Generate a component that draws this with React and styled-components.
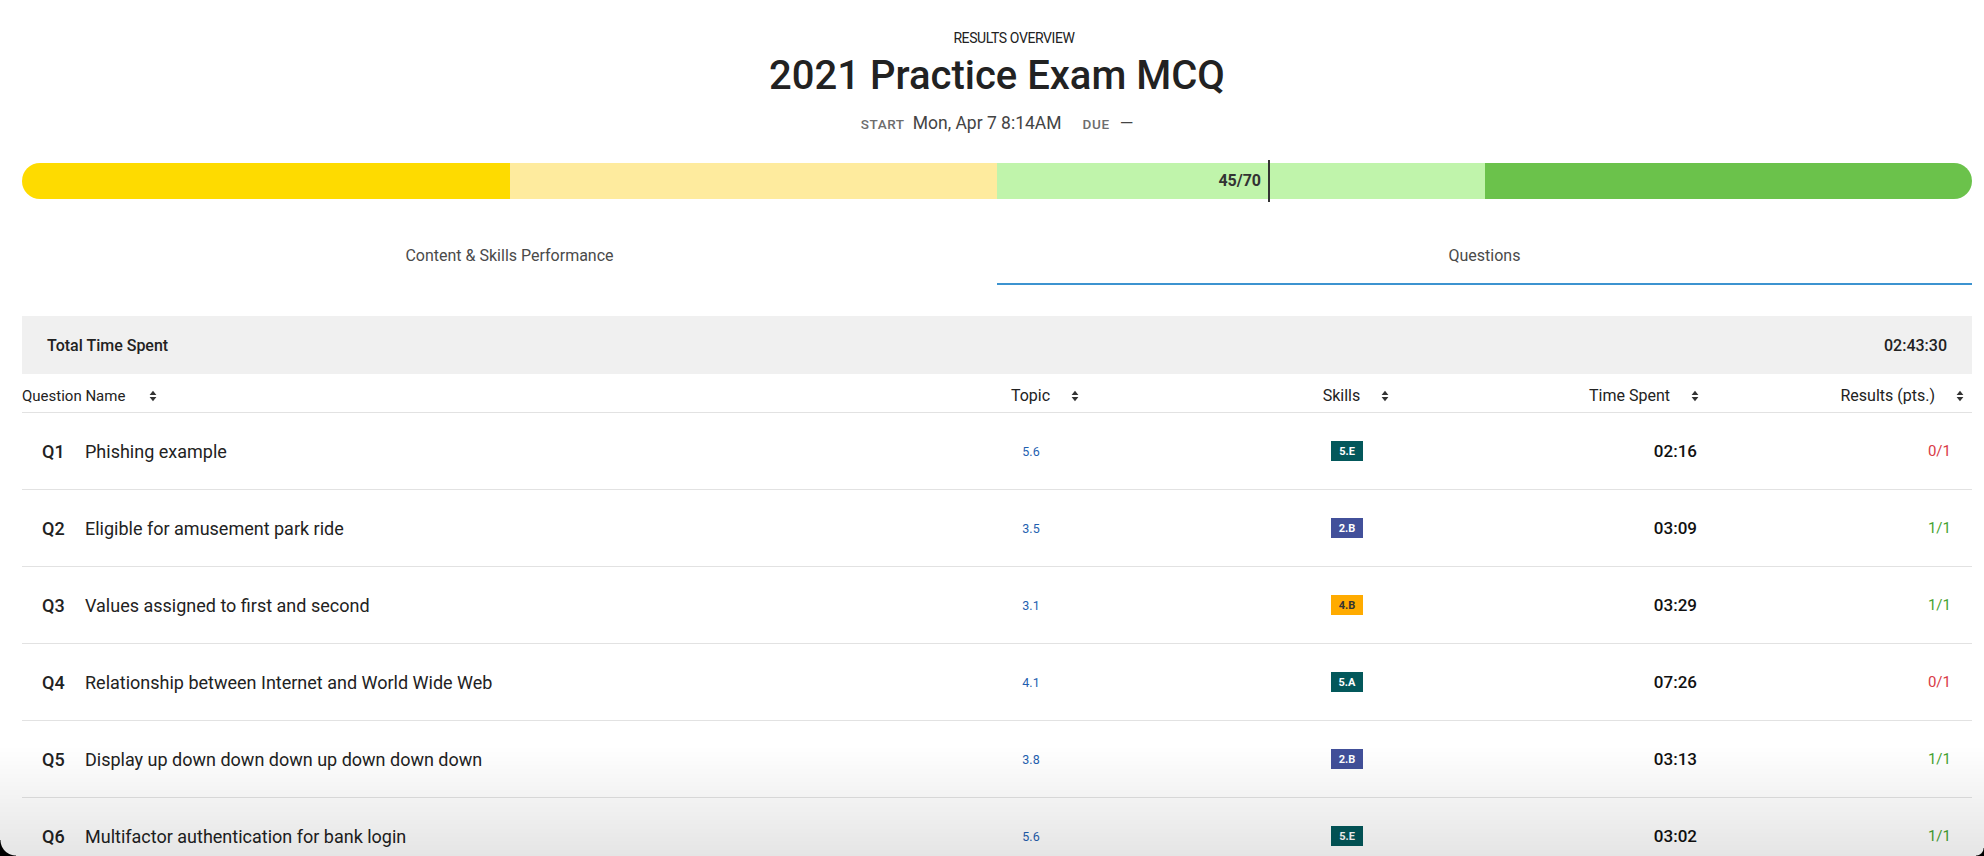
import React from "react";
import styled, { createGlobalStyle } from "styled-components";

const GlobalStyle = createGlobalStyle`
	html, body {
		margin: 0;
		padding: 0;
		background: #ffffff;
		overflow: hidden;
	}
	body {
		font-family: Roboto, "Liberation Sans", Arial, sans-serif;
		color: #222;
	}
`;

const Page = styled.div`
	padding: 28px 12px 0 22px;
`;

const Heading = styled.header`
	display: flex;
	flex-direction: column;
	align-items: center;
`;

const Eyebrow = styled.div`
	font-size: 14px;
	letter-spacing: -0.4px;
	line-height: 20px;
	color: #222;
	text-transform: uppercase;
	margin-left: 34px;
`;

const Title = styled.h1`
	margin: 5px 0 0;
	font-size: 40px;
	line-height: 46px;
	font-weight: 500;
	color: #222;
`;

const Meta = styled.div`
	margin-top: 14px;
	display: flex;
	align-items: baseline;
	line-height: 20px;
`;

const MetaLabel = styled.span`
	font-size: 13.5px;
	font-weight: 500;
	color: #6d6d6d;
	letter-spacing: 0.6px;
	margin-right: ${(p) => p.$gap}px;
`;

const MetaValue = styled.span`
	font-size: 17.5px;
	color: #444;
	margin-right: ${(p) => p.$gap || 0}px;
`;

const BarWrap = styled.div`
	position: relative;
	margin-top: 29px;
`;

const Bar = styled.div`
	display: flex;
	height: 36px;
	border-radius: 18px;
	overflow: hidden;
`;

const Segment = styled.div`
	flex: 1;
	background: ${(p) => p.$color};
`;

const Marker = styled.div`
	position: absolute;
	top: -3px;
	bottom: -3px;
	width: 2px;
	background: #333;
`;

const MarkerLabel = styled.span`
	position: absolute;
	right: 9px;
	top: 3px;
	line-height: 36px;
	font-size: 16px;
	font-weight: 700;
	color: #333;
	white-space: nowrap;
`;

const Tabs = styled.nav`
	display: grid;
	grid-template-columns: 1fr 1fr;
	margin-top: 28px;
`;

const Tab = styled.div`
	height: 55px;
	display: flex;
	align-items: center;
	justify-content: center;
	padding-top: 1px;
	font-size: 16px;
	color: #4a4a4a;
	border-bottom: 2px solid ${(p) => (p.$active ? "#3c93d0" : "transparent")};
`;

const TotalRow = styled.div`
	margin-top: 31px;
	height: 58px;
	background: #f0f0f0;
	display: flex;
	align-items: center;
	justify-content: space-between;
	padding: 0 25px;
	font-size: 16px;
	font-weight: 500;
	color: #222;
`;

const columns = "898px 240px 380px 170px 1fr";

const HeadRow = styled.div`
	display: grid;
	grid-template-columns: ${columns};
	height: 38px;
	border-bottom: 1px solid #e2e2e2;
	color: #222;
`;

const HeadCell = styled.div`
	display: flex;
	align-items: center;
	padding-top: 5px;
	font-size: ${(p) => p.$size || 16}px;
	justify-content: ${(p) => p.$justify || "flex-start"};
	padding-left: ${(p) => p.$shift || 0}px;
	padding-right: ${(p) => p.$pad || 0}px;
	gap: ${(p) => p.$gap || 21}px;
`;

const Row = styled.div`
	display: grid;
	grid-template-columns: ${columns};
	height: 76px;
	border-bottom: 1px solid #e2e2e2;
	align-items: center;
`;

const NameCell = styled.div`
	display: flex;
	align-items: center;
	padding-left: 20px;
	font-size: 18px;
`;

const QLabel = styled.span`
	width: 43px;
	font-weight: 500;
	color: #222;
`;

const QText = styled.span`
	color: #222;
`;

const Cell = styled.div`
	display: flex;
	justify-content: ${(p) => p.$justify || "center"};
	padding-right: ${(p) => p.$pad || 0}px;
`;

const Topic = styled.span`
	font-size: 12.5px;
	color: #1f5fb0;
`;

const Badge = styled.span`
	display: inline-flex;
	align-items: center;
	justify-content: center;
	width: 32px;
	height: 20px;
	font-size: 11px;
	font-weight: 700;
	background: ${(p) => p.$bg};
	color: ${(p) => p.$fg};
`;

const Time = styled.span`
	font-size: 17px;
	font-weight: 500;
	color: #111;
`;

const Score = styled.span`
	font-size: 15px;
	color: ${(p) => (p.$ok ? "#45a332" : "#d93a46")};
`;

const Shade = styled.div`
	position: fixed;
	left: 0;
	right: 0;
	bottom: 0;
	height: 110px;
	pointer-events: none;
	background: linear-gradient(to bottom, rgba(0, 0, 0, 0), rgba(0, 0, 0, 0.1));
`;

const Corner = styled.div`
	position: fixed;
	bottom: 0;
	${(p) => (p.$side === "left" ? "left: 0;" : "right: 0;")}
	width: ${(p) => p.$size}px;
	height: ${(p) => p.$size}px;
	pointer-events: none;
	background: radial-gradient(
		circle at ${(p) => (p.$side === "left" ? "100% 0" : "0 0")},
		transparent ${(p) => p.$size - 1}px,
		#000 ${(p) => p.$size}px
	);
`;

const SortIcon = () => (
	<svg width="8" height="12" viewBox="0 0 8 12" aria-hidden="true">
		<path d="M4 0.8 L7.4 5 H0.6 Z M4 11.2 L0.6 7 H7.4 Z" fill="#333" />
	</svg>
);

const skillColors = {
	"5.E": ["#03585b", "#fff"],
	"5.A": ["#03585b", "#fff"],
	"2.B": ["#42509a", "#fff"],
	"4.B": ["#ffab00", "#333"],
};

const questions = [
	{ id: "Q1", name: "Phishing example", topic: "5.6", skill: "5.E", time: "02:16", score: "0/1" },
	{ id: "Q2", name: "Eligible for amusement park ride", topic: "3.5", skill: "2.B", time: "03:09", score: "1/1" },
	{ id: "Q3", name: "Values assigned to first and second", topic: "3.1", skill: "4.B", time: "03:29", score: "1/1" },
	{ id: "Q4", name: "Relationship between Internet and World Wide Web", topic: "4.1", skill: "5.A", time: "07:26", score: "0/1" },
	{ id: "Q5", name: "Display up down down down up down down down", topic: "3.8", skill: "2.B", time: "03:13", score: "1/1" },
	{ id: "Q6", name: "Multifactor authentication for bank login", topic: "5.6", skill: "5.E", time: "03:02", score: "1/1" },
];

const segments = ["#fedb00", "#feeb9e", "#c0f4ab", "#6bc24b"];

const App = () => {
	return (
		<>
			<GlobalStyle />
			<Page>
				<Heading>
					<Eyebrow>Results Overview</Eyebrow>
					<Title>2021 Practice Exam MCQ</Title>
					<Meta>
						<MetaLabel $gap={8}>START</MetaLabel>
						<MetaValue $gap={21}>Mon, Apr 7 8:14AM</MetaValue>
						<MetaLabel $gap={10}>DUE</MetaLabel>
						<MetaValue>—</MetaValue>
					</Meta>
				</Heading>

				<BarWrap>
					<Bar>
						{segments.map((c) => (
							<Segment key={c} $color={c} />
						))}
					</Bar>
					<Marker style={{ left: "63.9%" }}>
						<MarkerLabel>45/70</MarkerLabel>
					</Marker>
				</BarWrap>

				<Tabs>
					<Tab>Content &amp; Skills Performance</Tab>
					<Tab $active>Questions</Tab>
				</Tabs>

				<TotalRow>
					<span>Total Time Spent</span>
					<span>02:43:30</span>
				</TotalRow>

				<HeadRow>
					<HeadCell $gap={24} $size={15}>
						Question Name <SortIcon />
					</HeadCell>
					<HeadCell $justify="center" $shift={10}>
						Topic <SortIcon />
					</HeadCell>
					<HeadCell $justify="center" $shift={12}>
						Skills <SortIcon />
					</HeadCell>
					<HeadCell $justify="flex-end" $pad={11}>
						Time Spent <SortIcon />
					</HeadCell>
					<HeadCell $justify="flex-end" $pad={8}>
						Results (pts.) <SortIcon />
					</HeadCell>
				</HeadRow>

				{questions.map((q) => {
					const [bg, fg] = skillColors[q.skill];
					return (
						<Row key={q.id}>
							<NameCell>
								<QLabel>{q.id}</QLabel>
								<QText>{q.name}</QText>
							</NameCell>
							<Cell $pad={18}>
								<Topic>{q.topic}</Topic>
							</Cell>
							<Cell $pad={6}>
								<Badge $bg={bg} $fg={fg}>
									{q.skill}
								</Badge>
							</Cell>
							<Cell $justify="flex-end" $pad={13}>
								<Time>{q.time}</Time>
							</Cell>
							<Cell $justify="flex-end" $pad={21}>
								<Score $ok={q.score === "1/1"}>{q.score}</Score>
							</Cell>
						</Row>
					);
				})}
			</Page>
			<Shade />
			<Corner $side="left" $size={16} />
			<Corner $side="right" $size={8} />
		</>
	);
};

export default App;
